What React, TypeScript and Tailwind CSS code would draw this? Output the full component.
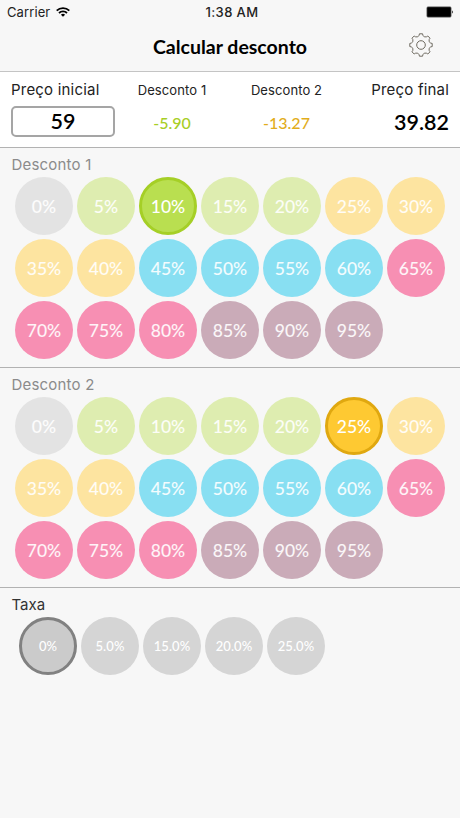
interface Rate {
  label: string;
  color: string;
}

const GREEN = "bg-[#deedb0]";
const YELLOW = "bg-[#fde4a0]";
const BLUE = "bg-[#88dff2]";
const PINK = "bg-[#f78fb3]";
const MAUVE = "bg-[#caabb8]";

const discounts: Rate[] = [
  { label: "0%", color: "bg-[#e3e3e3]" },
  { label: "5%", color: GREEN },
  { label: "10%", color: GREEN },
  { label: "15%", color: GREEN },
  { label: "20%", color: GREEN },
  { label: "25%", color: YELLOW },
  { label: "30%", color: YELLOW },
  { label: "35%", color: YELLOW },
  { label: "40%", color: YELLOW },
  { label: "45%", color: BLUE },
  { label: "50%", color: BLUE },
  { label: "55%", color: BLUE },
  { label: "60%", color: BLUE },
  { label: "65%", color: PINK },
  { label: "70%", color: PINK },
  { label: "75%", color: PINK },
  { label: "80%", color: PINK },
  { label: "85%", color: MAUVE },
  { label: "90%", color: MAUVE },
  { label: "95%", color: MAUVE },
];

const taxes = ["0%", "5.0%", "15.0%", "20.0%", "25.0%"];

// One tooth per 45 degrees, with a scooped valley between neighbours
function gearPath() {
  const point = (r: number, deg: number) => {
    const a = (deg * Math.PI) / 180;
    return `${(12 + r * Math.sin(a)).toFixed(2)} ${(12 - r * Math.cos(a)).toFixed(2)}`;
  };
  let d = `M${point(11.3, -8)}`;
  for (let i = 0; i < 8; i++) {
    const t = i * 45;
    d += `L${point(11.3, t + 8)}L${point(9.9, t + 11)}Q${point(7.8, t + 22.5)} ${point(9.9, t + 34)}L${point(11.3, t + 37)}`;
  }
  return d + "Z";
}

function StatusBar() {
  return (
    <div className="grid h-6 grid-cols-3 items-center font-['Inter',sans-serif] text-[13px] text-[#222]">
      <div className="flex items-center gap-[6px] pl-[7px] pt-px">
        <span className="tracking-[0.1px]">Carrier</span>
        <svg className="mb-[2px]" viewBox="0 0 14 10" width="14" height="10" fill="none" stroke="#000" strokeWidth="1.8">
          <path d="M.7 3.6a9 9 0 0 1 12.6 0M3 6a5.7 5.7 0 0 1 8 0" />
          <path d="M7 9.8 4.9 7.7a3 3 0 0 1 4.2 0Z" fill="#000" stroke="none" />
        </svg>
      </div>
      <span className="pl-[4px] pt-px text-center font-medium tracking-[0.4px]">1:38 AM</span>
      <svg className="mr-[6px] justify-self-end" viewBox="0 0 28 12" width="28" height="12">
        <rect x=".8" y=".8" width="24.4" height="10.4" rx="1.2" stroke="#888" strokeWidth=".6" />
        <path d="M26.2 4.2q1.8 1.8 0 3.6Z" />
      </svg>
    </div>
  );
}

function Header() {
  return (
    <header className="h-[72px] border-b border-[#c4c4c4]">
      <StatusBar />
      <div className="grid h-[46px] grid-cols-[60px_1fr_60px] items-center">
        <h1 className="col-start-2 text-center text-[19.5px] font-bold">Calcular desconto</h1>
        <button type="button" aria-label="Ajustes" className="mb-[5px] ml-[9px] w-6">
          <svg viewBox="0 0 24 24" width="24" height="24" fill="none" stroke="#6e6a60" strokeWidth="1" strokeLinejoin="round">
            <path d={gearPath()} />
            <circle cx="12" cy="12" r="4.3" />
          </svg>
        </button>
      </div>
    </header>
  );
}

function Summary() {
  return (
    <section className="grid h-[76px] grid-cols-[104px_114px_115px_1fr] border-b border-[#b2b2b2] bg-white px-[11px] pt-[8px] text-[#222]">
      <div>
        <div className="font-['Inter',sans-serif] text-[15px] leading-5 tracking-[0.2px]">Preço inicial</div>
        <div className="mt-[6px] flex h-[31px] items-center justify-center rounded-[5px] border-2 border-[#a5a5a5] text-[21.5px] font-semibold text-black">
          59
        </div>
      </div>
      <div className="text-center">
        <div className="font-['Inter',sans-serif] text-[13px] leading-5 tracking-[0.1px]">Desconto 1</div>
        <div className="mt-[7px] text-[16px] font-medium leading-[31px] text-[#a8ce25]">-5.90</div>
      </div>
      <div className="text-center">
        <div className="font-['Inter',sans-serif] text-[13px] leading-5 tracking-[0.1px]">Desconto 2</div>
        <div className="mt-[7px] text-[16px] font-medium leading-[31px] text-[#e2ad1b]">-13.27</div>
      </div>
      <div className="text-right">
        <div className="font-['Inter',sans-serif] text-[15px] leading-5 tracking-[0.2px]">Preço final</div>
        <div className="mt-[7px] text-[21.5px] font-semibold leading-[31px] text-black">39.82</div>
      </div>
    </section>
  );
}

interface DiscountSectionProps {
  title: string;
  selected: string;
  selectedStyle: string;
}

function DiscountSection({ title, selected, selectedStyle }: DiscountSectionProps) {
  return (
    <section className="h-[220px] border-b border-[#b2b2b2] pt-[7px]">
      <h2 className="pl-[11.5px] font-['Inter',sans-serif] text-[15px] leading-5 tracking-[0.2px] text-[#8b8b8b]">{title}</h2>
      <div className="mt-[2px] grid grid-cols-[repeat(7,58px)] gap-1 pl-[15px]">
        {discounts.map(({ label, color }) => (
          <button
            key={label}
            type="button"
            className={`h-[58px] rounded-full pt-0.5 text-[17.5px] font-medium ${label === selected ? `text-white ${selectedStyle}` : `text-white/90 ${color}`}`}
          >
            {label}
          </button>
        ))}
      </div>
    </section>
  );
}

function TaxSection() {
  return (
    <section className="pt-[7px]">
      <h2 className="pl-[11.5px] font-['Inter',sans-serif] text-[15px] leading-5 text-[#333]">Taxa</h2>
      <div className="mt-[2px] flex gap-1 pl-[19px]">
        {taxes.map((label, i) => (
          <button
            key={label}
            type="button"
            className={`size-[58px] rounded-full pt-px text-[13px] font-medium tracking-[0.1px] text-white ${i === 0 ? "border-[3px] border-[#818181] bg-[#cbcbcb]" : "bg-[#d5d5d5]"}`}
          >
            {label}
          </button>
        ))}
      </div>
    </section>
  );
}

export default function App() {
  return (
    <main className="h-[818px] w-[460px] overflow-hidden bg-[#f7f7f7] font-['Lato',sans-serif] text-black">
      <Header />
      <Summary />
      <DiscountSection title="Desconto 1" selected="10%" selectedStyle="border-[3px] border-[#a5cf26] bg-[#b9df50]" />
      <DiscountSection title="Desconto 2" selected="25%" selectedStyle="border-[3px] border-[#e0a810] bg-[#fec932]" />
      <TaxSection />
    </main>
  );
}
